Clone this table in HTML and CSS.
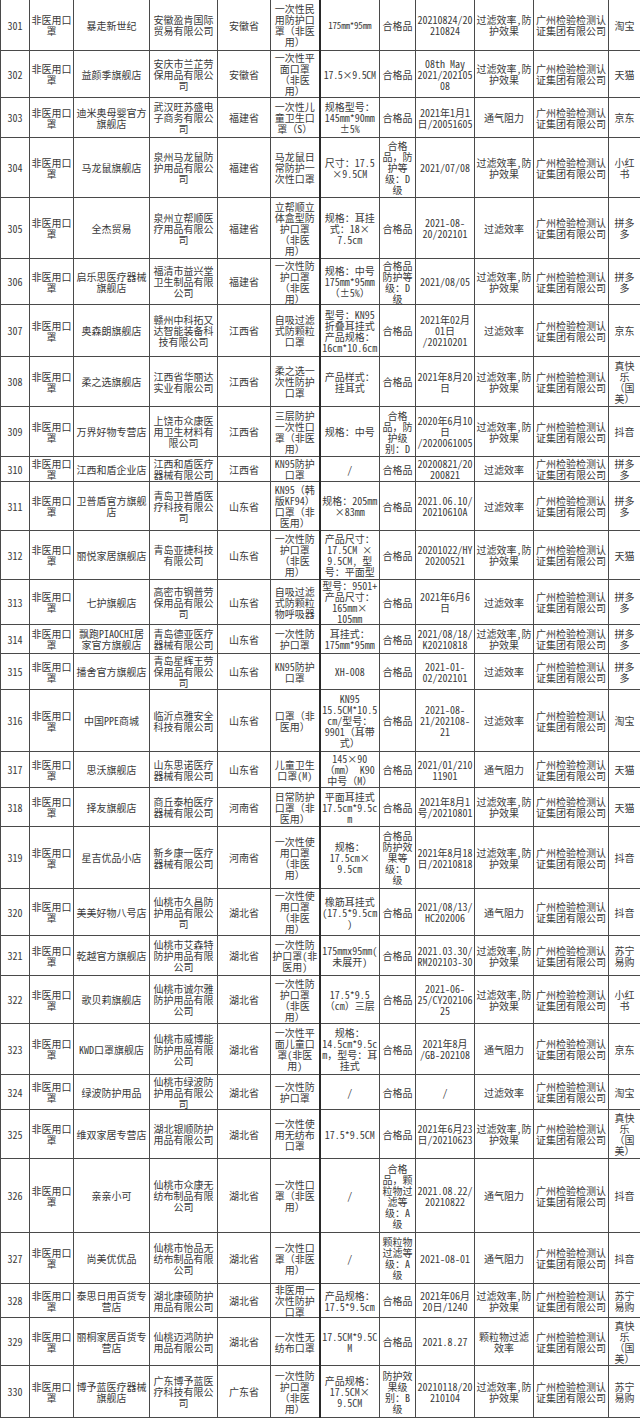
FILE: index.html
```html
<!DOCTYPE html>
<html lang="zh-CN">
<head>
<meta charset="utf-8">
<title>非医用口罩抽检结果</title>
<link rel="stylesheet" href="styles.css">
</head>
<body>
<table class="sheet">
<colgroup>
<col class="c-no"><col class="c-cat"><col class="c-shop"><col class="c-co"><col class="c-prov"><col class="c-prod"><col class="c-spec"><col class="c-grade"><col class="c-batch"><col class="c-item"><col class="c-lab"><col class="c-plat">
</colgroup>
<tbody>
<tr class="h51"><td>301</td><td>非医用口罩</td><td>暴走新世纪</td><td>安徽盈肯国际贸易有限公司</td><td>安徽省</td><td class="prod">一次性民用防护口罩（非医用）</td><td class="small">175mm*95mm</td><td>合格品</td><td class="pl">20210824/20
210824</td><td>过滤效率,防护效果</td><td>广州检验检测认证集团有限公司</td><td>淘宝</td></tr>
<tr class="h47"><td>302</td><td>非医用口罩</td><td>益颜季旗舰店</td><td>安庆市兰芷劳保用品有限公司</td><td>安徽省</td><td class="prod pl">一次性平
面口罩
（非医
用）</td><td class="nowrap">17.5×9.5CM</td><td>合格品</td><td class="pl">08th May
2021/202105
08</td><td>过滤效率,防护效果</td><td>广州检验检测认证集团有限公司</td><td>天猫</td></tr>
<tr class="h40"><td>303</td><td>非医用口罩</td><td>迪米奥母婴官方旗舰店</td><td>武汉旺苏盛电子商务有限公司</td><td>福建省</td><td class="prod">一次性儿童卫生口罩（S）</td><td class="pl">规格型号：
145mm*90mm
±5%</td><td>合格品</td><td class="pl">2021年1月1
日/20051605</td><td>通气阻力</td><td>广州检验检测认证集团有限公司</td><td>京东</td></tr>
<tr class="h60"><td>304</td><td>非医用口罩</td><td>马龙鼠旗舰店</td><td>泉州马龙鼠防护用品有限公司</td><td>福建省</td><td class="prod">马龙鼠日常防护一次性口罩</td><td class="pl">尺寸：17.5
×9.5CM</td><td>合格品，防护等级：D级</td><td>2021/07/08</td><td>过滤效率,防护效果</td><td>广州检验检测认证集团有限公司</td><td>小红书</td></tr>
<tr class="h61"><td>305</td><td>非医用口罩</td><td>全杰贸易</td><td>泉州立帮顺医疗用品有限公司</td><td>福建省</td><td class="prod pl">立帮顺立
体盒型防
护口罩
（非医
用）</td><td class="pl">规格：耳挂
式：18×
7.5cm</td><td>合格品</td><td class="pl">2021-08-
20/202101</td><td>过滤效率</td><td>广州检验检测认证集团有限公司</td><td>拼多多</td></tr>
<tr class="h46"><td>306</td><td>非医用口罩</td><td>启乐思医疗器械旗舰店</td><td>福清市益兴堂卫生制品有限公司</td><td>福建省</td><td class="prod pl">一次性防
护口罩
（非医
用）</td><td class="pl">规格：中号
175mm*95mm
（±5%）</td><td>合格品防护等级：D级</td><td>2021/08/05</td><td>过滤效率,防护效果</td><td>广州检验检测认证集团有限公司</td><td>拼多多</td></tr>
<tr class="h52"><td>307</td><td>非医用口罩</td><td>奥森朗旗舰店</td><td>赣州中科拓又达智能装备科技有限公司</td><td>江西省</td><td class="prod">自吸过滤式防颗粒口罩</td><td class="pl">型号：KN95
折叠耳挂式
产品规格：
16cm*10.6cm</td><td>合格品</td><td class="pl">2021年02月
01日
/20210201</td><td>过滤效率</td><td>广州检验检测认证集团有限公司</td><td>京东</td></tr>
<tr class="h50"><td>308</td><td>非医用口罩</td><td>柔之选旗舰店</td><td>江西省华丽达实业有限公司</td><td>江西省</td><td class="prod">柔之选一次性防护口罩</td><td class="pl">产品样式：
挂耳式</td><td>合格品</td><td class="pl">2021年8月20
日</td><td>过滤效率,防护效果</td><td>广州检验检测认证集团有限公司</td><td class="pl">真快
乐
（国
美）</td></tr>
<tr class="h50"><td>309</td><td>非医用口罩</td><td>万界好物专营店</td><td>上饶市众康医用卫生材料有限公司</td><td>江西省</td><td class="prod">三层防护一次性口罩（非医用）</td><td>规格：中号</td><td>合格品，防护级别：D</td><td class="pl">2020年6月10
日
/2020061005</td><td>过滤效率,防护效果</td><td>广州检验检测认证集团有限公司</td><td>抖音</td></tr>
<tr class="h25"><td>310</td><td>非医用口罩</td><td>江西和盾企业店</td><td>江西和盾医疗器械有限公司</td><td>江西省</td><td class="prod">KN95防护口罩</td><td>/</td><td>合格品</td><td class="pl">20200821/20
200821</td><td>过滤效率</td><td>广州检验检测认证集团有限公司</td><td>拼多多</td></tr>
<tr class="h49"><td>311</td><td>非医用口罩</td><td>卫普盾官方旗舰店</td><td>青岛卫普盾医疗科技有限公司</td><td>山东省</td><td class="prod">KN95（韩版KF94）口罩（非医用）</td><td class="pl">规格：205mm
×83mm</td><td>合格品</td><td class="pl">2021.06.10/
20210610A</td><td>过滤效率</td><td>广州检验检测认证集团有限公司</td><td>拼多多</td></tr>
<tr class="h49"><td>312</td><td>非医用口罩</td><td>丽悦家居旗舰店</td><td>青岛亚捷科技有限公司</td><td>山东省</td><td class="prod pl">一次性防
护口罩
（非医
用）</td><td class="pl">产品尺寸：
17.5CM ×
9.5CM, 型
号：平面型</td><td>合格品</td><td class="pl">20201022/HY
20200521</td><td>过滤效率,防护效果</td><td>广州检验检测认证集团有限公司</td><td>天猫</td></tr>
<tr class="h45"><td>313</td><td>非医用口罩</td><td>七护旗舰店</td><td>高密市钢普劳保用品有限公司</td><td>山东省</td><td class="prod">自吸过滤式防颗粒物呼吸器</td><td class="pl">型号：9501+
产品尺寸：
165mm×
105mm</td><td>合格品</td><td class="pl">2021年6月6
日</td><td>过滤效率</td><td>广州检验检测认证集团有限公司</td><td>拼多多</td></tr>
<tr class="h29"><td>314</td><td>非医用口罩</td><td>飘跑PIAOCHI居家官方旗舰店</td><td>青岛德亚医疗器械有限公司</td><td>山东省</td><td class="prod">一次性防护口罩</td><td class="pl">耳挂式：
175mm*95mm</td><td>合格品</td><td class="pl">2021/08/18/
K20210818</td><td>过滤效率,防护效果</td><td>广州检验检测认证集团有限公司</td><td>拼多多</td></tr>
<tr class="h36"><td>315</td><td>非医用口罩</td><td>播舍官方旗舰店</td><td>青岛星辉王劳保用品有限公司</td><td>山东省</td><td class="prod">KN95防护口罩</td><td>XH-008</td><td>合格品</td><td class="pl">2021-01-
02/202101</td><td>过滤效率</td><td>广州检验检测认证集团有限公司</td><td>拼多多</td></tr>
<tr class="h62"><td>316</td><td>非医用口罩</td><td>中国PPE商城</td><td>临沂点雅安全科技有限公司</td><td>山东省</td><td class="prod">口罩（非医用）</td><td class="pl">KN95
15.5CM*10.5
cm/型号：
9901（耳带
式）</td><td>合格品</td><td class="pl">2021-08-
21/202108-
21</td><td>过滤效率</td><td>广州检验检测认证集团有限公司</td><td>淘宝</td></tr>
<tr class="h36"><td>317</td><td>非医用口罩</td><td>思沃旗舰店</td><td>山东思诺医疗器械有限公司</td><td>山东省</td><td class="prod">儿童卫生口罩(M)</td><td class="pl">145×90
（mm） K90
中号（M）</td><td>合格品</td><td class="pl">2021/01/210
11901</td><td>通气阻力</td><td>广州检验检测认证集团有限公司</td><td>天猫</td></tr>
<tr class="h39"><td>318</td><td>非医用口罩</td><td>择友旗舰店</td><td>商丘泰柏医疗器械有限公司</td><td>河南省</td><td class="prod pl">日常防护
口罩（非
医用）</td><td class="pl">平面耳挂式
17.5cm*9.5c
m</td><td>合格品</td><td class="pl">2021年8月1
号/20210801</td><td>过滤效率,防护效果</td><td>广州检验检测认证集团有限公司</td><td>天猫</td></tr>
<tr class="h62"><td>319</td><td>非医用口罩</td><td>星吉优品小店</td><td>新乡康一医疗器械有限公司</td><td>河南省</td><td class="prod pl">一次性使
用口罩
（非医
用）</td><td class="pl">规格：
17.5cm×
9.5cm</td><td>合格品防护效果等级：D级</td><td class="pl">2021年8月18
日/20210818</td><td>过滤效率,防护效果</td><td>广州检验检测认证集团有限公司</td><td>抖音</td></tr>
<tr class="h47"><td>320</td><td>非医用口罩</td><td>美美好物八号店</td><td>仙桃市久昌防护用品有限公司</td><td>湖北省</td><td class="prod pl">一次性使
用口罩
（非医
用）</td><td class="pl">橡筋耳挂式
(17.5*9.5cm
)</td><td>合格品</td><td class="pl">2021/08/13/
HC202006</td><td>通气阻力</td><td>广州检验检测认证集团有限公司</td><td>抖音</td></tr>
<tr class="h40"><td>321</td><td>非医用口罩</td><td>乾越官方旗舰店</td><td>仙桃市艾森特防护用品有限公司</td><td>湖北省</td><td class="prod">一次性防护口罩(非医用)</td><td class="pl">175mmx95mm(
未展开)</td><td>合格品</td><td class="pl">2021.03.30/
RM202103-30</td><td>过滤效率,防护效果</td><td>广州检验检测认证集团有限公司</td><td class="pl">苏宁
易购</td></tr>
<tr class="h48"><td>322</td><td>非医用口罩</td><td>歌贝莉旗舰店</td><td>仙桃市诚尔雅防护用品有限公司</td><td>湖北省</td><td class="prod pl">一次性防
护口罩
（非医
用）</td><td class="pl">17.5*9.5
（cm）三层</td><td>合格品</td><td class="pl">2021-06-
25/CY202106
25</td><td>过滤效率,防护效果</td><td>广州检验检测认证集团有限公司</td><td>小红书</td></tr>
<tr class="h51"><td>323</td><td>非医用口罩</td><td>KWD口罩旗舰店</td><td>仙桃市威博能防护用品有限公司</td><td>湖北省</td><td class="prod">一次性平面儿童口罩(非医用)</td><td class="pl">规格：
14.5cm*9.5c
m，型号：耳
挂式</td><td>合格品</td><td class="pl">2021年8月
/GB-202108</td><td>通气阻力</td><td>广州检验检测认证集团有限公司</td><td>京东</td></tr>
<tr class="h35"><td>324</td><td>非医用口罩</td><td>绿波防护用品</td><td>仙桃市绿波防护用品有限公司</td><td>湖北省</td><td class="prod">一次性防护口罩</td><td>/</td><td>合格品</td><td>/</td><td>过滤效率</td><td>广州检验检测认证集团有限公司</td><td>淘宝</td></tr>
<tr class="h49"><td>325</td><td>非医用口罩</td><td>维双家居专营店</td><td>湖北银顺防护用品有限公司</td><td>湖北省</td><td class="prod">一次性使用无纺布口罩</td><td>17.5*9.5CM</td><td>合格品</td><td class="pl">2021年6月23
日/20210623</td><td>过滤效率,防护效果</td><td>广州检验检测认证集团有限公司</td><td class="pl">真快
乐
（国
美）</td></tr>
<tr class="h74"><td>326</td><td>非医用口罩</td><td>亲亲小可</td><td>仙桃市众康无纺布制品有限公司</td><td>湖北省</td><td class="prod pl">一次性口
罩（非医
用）</td><td>/</td><td>合格品，颗粒物过滤等级：A级</td><td class="pl">2021.08.22/
20210822</td><td>通气阻力</td><td>广州检验检测认证集团有限公司</td><td>抖音</td></tr>
<tr class="h51"><td>327</td><td>非医用口罩</td><td>尚美优优品</td><td>仙桃市怡品无纺布制品有限公司</td><td>湖北省</td><td class="prod pl">一次性口
罩（非医
用）</td><td>/</td><td>颗粒物过滤等级：A级</td><td>2021-08-01</td><td>通气阻力</td><td>广州检验检测认证集团有限公司</td><td>抖音</td></tr>
<tr class="h34"><td>328</td><td>非医用口罩</td><td>泰思日用百货专营店</td><td>湖北康硕防护用品有限公司</td><td>湖北省</td><td class="prod">非医用一次性防护口罩</td><td class="pl">产品规格：
17.5*9.5cm</td><td>合格品</td><td class="pl">2021年06月
20日/1240</td><td>过滤效率,防护效果</td><td>广州检验检测认证集团有限公司</td><td class="pl">苏宁
易购</td></tr>
<tr class="h48"><td>329</td><td>非医用口罩</td><td>丽桐家居百货专营店</td><td>仙桃迈鸿防护用品有限公司</td><td>湖北省</td><td class="prod">一次性无纺布口罩</td><td class="pl">17.5CM*9.5C
M</td><td>合格品</td><td>2021.8.27</td><td>颗粒物过滤效率</td><td>广州检验检测认证集团有限公司</td><td class="pl">真快
乐
（国
美）</td></tr>
<tr class="h52"><td>330</td><td>非医用口罩</td><td>博予蓝医疗器械旗舰店</td><td>广东博予蓝医疗科技有限公司</td><td>广东省</td><td class="prod pl">一次性防
护口罩
（非医
用）</td><td class="pl">产品规格：
17.5CM×
9.5CM</td><td>防护效果级别：B级</td><td class="pl">20210118/20
210104</td><td>过滤效率,防护效果</td><td>广州检验检测认证集团有限公司</td><td class="pl">苏宁
易购</td></tr>
</tbody>
</table>
</body>
</html>
```
FILE: styles.css
```css
html, body {
  margin: 0;
  padding: 0;
  background: #ffffff;
}

.sheet {
  width: 640px;
  table-layout: fixed;
  border-collapse: collapse;
  margin-top: -1px;
  font-family: "Noto Sans Mono CJK SC", "Noto Sans CJK SC", monospace;
  font-size: 10px;
  line-height: 11px;
  color: #3a3a3a;
  text-spacing-trim: space-all;
}

.c-no { width: 29px; }
.c-cat { width: 44px; }
.c-shop { width: 76px; }
.c-co { width: 68px; }
.c-prov { width: 53px; }
.c-prod { width: 49px; }
.c-spec { width: 60px; }
.c-grade { width: 36px; }
.c-batch { width: 59px; }
.c-item { width: 59px; }
.c-lab { width: 75px; }
.c-plat { width: 32px; }

.sheet td {
  border: 1px solid #4a4a4a;
  padding: 0 1px;
  text-align: center;
  vertical-align: middle;
  overflow-wrap: anywhere;
  overflow: hidden;
}

.sheet td.prod {
  border-right: 2px solid #2a2a2a;
}

.pl {
  white-space: pre-line;
}

.nowrap {
  white-space: nowrap;
  letter-spacing: -0.3px;
}

.small {
  font-size: 9px;
  letter-spacing: -0.2px;
}

.h25 { height: 25px; }
.h29 { height: 29px; }
.h34 { height: 34px; }
.h35 { height: 35px; }
.h36 { height: 36px; }
.h39 { height: 39px; }
.h40 { height: 40px; }
.h45 { height: 45px; }
.h46 { height: 46px; }
.h47 { height: 47px; }
.h48 { height: 48px; }
.h49 { height: 49px; }
.h50 { height: 50px; }
.h51 { height: 51px; }
.h52 { height: 52px; }
.h60 { height: 60px; }
.h61 { height: 61px; }
.h62 { height: 62px; }
.h74 { height: 74px; }
```
